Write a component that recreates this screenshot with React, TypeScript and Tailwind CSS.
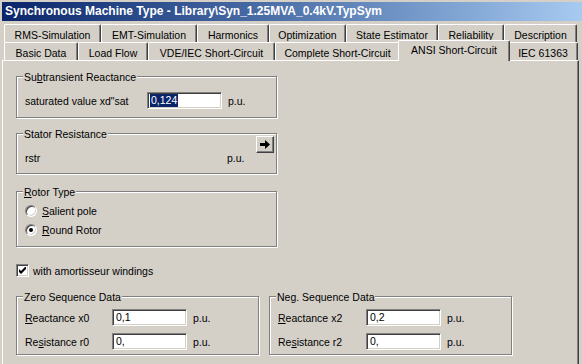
import React from "react";

const topTabs = [
  { label: "RMS-Simulation", w: "w-[97px]" },
  { label: "EMT-Simulation", w: "w-[96px]" },
  { label: "Harmonics", w: "w-[72px]" },
  { label: "Optimization", w: "w-[77px]" },
  { label: "State Estimator", w: "w-[92px]" },
  { label: "Reliability", w: "w-[66px]" },
  { label: "Description", w: "w-[73px]" },
];

const bottomTabs = [
  { label: "Basic Data", w: "w-[74px]" },
  { label: "Load Flow", w: "w-[70px]" },
  { label: "VDE/IEC Short-Circuit", w: "w-[127px]" },
  { label: "Complete Short-Circuit", w: "w-[125px]" },
  { label: "ANSI Short-Circuit", w: "w-[112px]", active: true },
  { label: "IEC 61363", w: "w-[70px]" },
];

function Tab({ label, w, active }: { label: string; w: string; active?: boolean }) {
  if (active) {
    return (
      <div
        className={`${w} relative z-10 -mx-[2px] -mb-px h-[21px] bg-[#d4d0c8] border-l border-t border-white border-r border-r-[#404040] shadow-[inset_-1px_0_0_#808080] rounded-t-[2px] flex justify-center pt-[3px]`}
      >
        {label}
      </div>
    );
  }
  return (
    <div
      className={`${w} h-[18px] shrink-0 bg-[#d4d0c8] border-l border-t border-white border-r border-r-[#404040] shadow-[inset_-1px_0_0_#808080] rounded-t-[2px] flex justify-center pt-[4px]`}
    >
      {label}
    </div>
  );
}

function Input({ value, selected }: { value: string; selected?: boolean }) {
  return (
    <div className="w-[75px] h-[17px] shrink-0 bg-white border border-t-[#808080] border-l-[#808080] border-r-white border-b-white shadow-[inset_1px_1px_0_#404040,inset_-1px_-1px_0_#d4d0c8] flex items-center pl-[2px]">
      {selected ? (
        <span className="bg-[#0a246a] text-white h-[13px] leading-[13px] px-px">{value}</span>
      ) : (
        <span className="leading-[13px] px-px">{value}</span>
      )}
    </div>
  );
}

function Group({ title, className, children }: { title: React.ReactNode; className: string; children: React.ReactNode }) {
  return (
    <div className={`relative shrink-0 border border-[#808080] shadow-[inset_1px_1px_0_#fff,1px_1px_0_#fff] ${className}`}>
      <span className="absolute -top-[6px] left-[6px] px-px bg-[#d4d0c8] leading-[13px]">{title}</span>
      {children}
    </div>
  );
}

function Radio({ checked, children }: { checked?: boolean; children: React.ReactNode }) {
  return (
    <div className="h-[19px] flex items-center">
      <div className="w-[12px] h-[12px] rounded-full bg-white border border-t-[#808080] border-l-[#808080] border-r-white border-b-white shadow-[inset_1px_1px_0_#404040,inset_-1px_-1px_0_#d4d0c8] flex items-center justify-center">
        {checked && <div className="w-[4px] h-[4px] rounded-full bg-black" />}
      </div>
      <span className="ml-[5px] leading-[13px] pt-px">{children}</span>
    </div>
  );
}

export default function App() {
  return (
    <div className="w-[582px] h-[364px] overflow-hidden bg-[#d4d0c8] flex flex-col font-['Liberation_Sans',Arial,sans-serif] text-[10.5px] leading-[13px] text-black">
      {/* title bar */}
      <div className="ml-[2px] mt-[2px] h-[19px] shrink-0 bg-gradient-to-r from-[#0a246a] to-[#a6caf0] flex items-center pl-[3px] text-white font-bold text-[12px] whitespace-nowrap">
        Synchronous Machine Type - Library\Syn_1.25MVA_0.4kV.TypSym
      </div>

      {/* tabs */}
      <div className="mt-[3px] pl-[4px] flex h-[18px] shrink-0 whitespace-nowrap">
        {topTabs.map((t) => (
          <Tab key={t.label} label={t.label} w={t.w} />
        ))}
      </div>
      <div className="pl-[4px] flex items-end h-[18px] shrink-0 relative z-10 whitespace-nowrap">
        {bottomTabs.map((t) => (
          <Tab key={t.label} label={t.label} w={t.w} active={t.active} />
        ))}
      </div>

      {/* page */}
      <div className="ml-[2px] w-[577px] flex-1 border-l border-t border-white border-r border-r-[#404040] shadow-[inset_-1px_0_0_#808080] flex flex-col pl-[13px] whitespace-nowrap">
        <Group
          className="mt-[15px] w-[261px] h-[42px] pl-[8px] pt-[15px]"
          title={<>Su<u>b</u>transient Reactance</>}
        >
          <div className="flex items-center">
            <span className="w-[122px] pt-px">saturated value xd"sat</span>
            <Input value="0,124" selected />
            <span className="ml-[6px] pt-px">p.u.</span>
          </div>
        </Group>

        <Group className="mt-[15px] w-[261px] h-[41px] pl-[8px] pt-[2px] pr-[2px]" title="Stator Resistance">
          <div className="flex justify-end">
            <button className="w-[18px] h-[17px] bg-[#d4d0c8] border border-t-white border-l-white border-r-[#404040] border-b-[#404040] shadow-[inset_-1px_-1px_0_#808080] flex items-center justify-center">
              <svg width="10" height="9" viewBox="0 0 10 9">
                <path d="M0 3h5V0l5 4.5L5 9V6H0z" fill="#000" />
              </svg>
            </button>
          </div>
          <div className="-mt-px flex">
            <span className="w-[202px]">rstr</span>
            <span>p.u.</span>
          </div>
        </Group>

        <Group className="mt-[17px] w-[261px] h-[56px] pl-[8px] pt-[9px]" title={<><u>R</u>otor Type</>}>
          <Radio>
            <u>S</u>alient pole
          </Radio>
          <Radio checked>
            <u>R</u>ound Rotor
          </Radio>
        </Group>

        <div className="mt-[17px] h-[13px] flex items-center">
          <div className="w-[13px] h-[13px] bg-white border border-t-[#808080] border-l-[#808080] border-r-white border-b-white shadow-[inset_1px_1px_0_#404040,inset_-1px_-1px_0_#d4d0c8] flex items-center justify-center">
            <svg width="7" height="7" viewBox="0 0 7 7">
              <path d="M0 2v3l2 2 5-5V-1L2 4z" fill="#000" />
            </svg>
          </div>
          <span className="ml-[4px] pt-[2px]">with amortisseur windings</span>
        </div>

        <div className="mt-[19px] flex">
          <Group className="w-[243px] h-[59px] pl-[8px] pt-[12px]" title="Zero Sequence Data">
            <div className="flex items-center">
              <span className="w-[87px] pt-px">
                <u>R</u>eactance x0
              </span>
              <Input value="0,1" />
              <span className="ml-[6px] pt-px">p.u.</span>
            </div>
            <div className="mt-[7px] flex items-center">
              <span className="w-[87px] pt-px">
                Re<u>s</u>istance r0
              </span>
              <Input value="0," />
              <span className="ml-[6px] pt-px">p.u.</span>
            </div>
          </Group>
          <Group className="ml-[10px] w-[243px] h-[59px] pl-[8px] pt-[12px]" title="Neg. Sequence Data">
            <div className="flex items-center">
              <span className="w-[88px] pt-px">
                <u>R</u>eactance x2
              </span>
              <Input value="0,2" />
              <span className="ml-[6px] pt-px">p.u.</span>
            </div>
            <div className="mt-[7px] flex items-center">
              <span className="w-[88px] pt-px">
                Re<u>s</u>istance r2
              </span>
              <Input value="0," />
              <span className="ml-[6px] pt-px">p.u.</span>
            </div>
          </Group>
        </div>
      </div>
    </div>
  );
}
